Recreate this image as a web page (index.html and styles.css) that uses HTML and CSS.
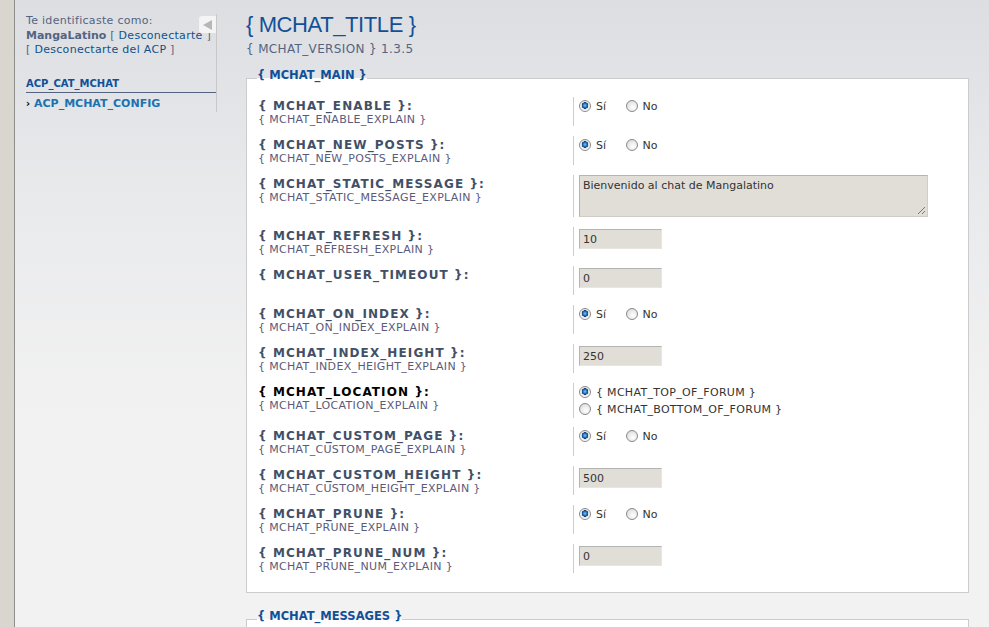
FILE: index.html
```html
<!DOCTYPE html>
<html lang="es">
<head>
    <meta charset="UTF-8">
    <title>mChat</title>
    <link rel="stylesheet" href="styles.css">
</head>
<body>
<div class="strip"></div>
<div class="sidebar">
    <div class="menu">
        <div class="login">
            Te identificaste como:<br>
            <b>MangaLatino</b> [ <a href="#">Desconectarte</a> ]<br>
            [ <a href="#">Desconectarte del ACP</a> ]
        </div>
        <div class="cat">ACP_CAT_MCHAT</div>
        <div class="item"><span class="arrow">&#8250;</span>ACP_MCHAT_CONFIG</div>
        <div class="collapse"><span class="tri"></span></div>
    </div>
</div>
<div class="main">
    <h1>{ MCHAT_TITLE }</h1>
    <p class="version">{ MCHAT_VERSION } 1.3.5</p>

    <fieldset>
        <legend>{ MCHAT_MAIN }</legend>
        <dl>
            <dt><label>{ MCHAT_ENABLE }:</label><span>{ MCHAT_ENABLE_EXPLAIN }</span></dt>
            <dd class="yn"><span class="radio on"></span>Sí <span class="radio"></span>No</dd>
        </dl>
        <dl>
            <dt><label>{ MCHAT_NEW_POSTS }:</label><span>{ MCHAT_NEW_POSTS_EXPLAIN }</span></dt>
            <dd class="yn"><span class="radio on"></span>Sí <span class="radio"></span>No</dd>
        </dl>
        <dl class="tall">
            <dt><label>{ MCHAT_STATIC_MESSAGE }:</label><span>{ MCHAT_STATIC_MESSAGE_EXPLAIN }</span></dt>
            <dd><div class="textarea">Bienvenido al chat de Mangalatino<span class="grip"></span></div></dd>
        </dl>
        <dl>
            <dt><label>{ MCHAT_REFRESH }:</label><span>{ MCHAT_REFRESH_EXPLAIN }</span></dt>
            <dd><div class="input">10</div></dd>
        </dl>
        <dl>
            <dt><label>{ MCHAT_USER_TIMEOUT }:</label></dt>
            <dd><div class="input">0</div></dd>
        </dl>
        <dl>
            <dt><label>{ MCHAT_ON_INDEX }:</label><span>{ MCHAT_ON_INDEX_EXPLAIN }</span></dt>
            <dd class="yn"><span class="radio on"></span>Sí <span class="radio"></span>No</dd>
        </dl>
        <dl>
            <dt><label>{ MCHAT_INDEX_HEIGHT }:</label><span>{ MCHAT_INDEX_HEIGHT_EXPLAIN }</span></dt>
            <dd><div class="input">250</div></dd>
        </dl>
        <dl class="double">
            <dt><label class="hot">{ MCHAT_LOCATION }:</label><span>{ MCHAT_LOCATION_EXPLAIN }</span></dt>
            <dd>
                <div class="opt"><span class="radio on"></span>{ MCHAT_TOP_OF_FORUM }</div>
                <div class="opt"><span class="radio"></span>{ MCHAT_BOTTOM_OF_FORUM }</div>
            </dd>
        </dl>
        <dl>
            <dt><label>{ MCHAT_CUSTOM_PAGE }:</label><span>{ MCHAT_CUSTOM_PAGE_EXPLAIN }</span></dt>
            <dd class="yn"><span class="radio on"></span>Sí <span class="radio"></span>No</dd>
        </dl>
        <dl>
            <dt><label>{ MCHAT_CUSTOM_HEIGHT }:</label><span>{ MCHAT_CUSTOM_HEIGHT_EXPLAIN }</span></dt>
            <dd><div class="input">500</div></dd>
        </dl>
        <dl>
            <dt><label>{ MCHAT_PRUNE }:</label><span>{ MCHAT_PRUNE_EXPLAIN }</span></dt>
            <dd class="yn"><span class="radio on"></span>Sí <span class="radio"></span>No</dd>
        </dl>
        <dl>
            <dt><label>{ MCHAT_PRUNE_NUM }:</label><span>{ MCHAT_PRUNE_NUM_EXPLAIN }</span></dt>
            <dd><div class="input">0</div></dd>
        </dl>
    </fieldset>

    <fieldset class="next">
        <legend>{ MCHAT_MESSAGES }</legend>
    </fieldset>
</div>
</body>
</html>
```

FILE: styles.css
```css
html, body{
    margin:0;
    height:100%;
    overflow:hidden;
}
body{
    display:flex;
    font-family: "DejaVu Sans", Verdana, sans-serif;
    font-size:11px;
    color:#536482;
    background: linear-gradient(#dcdee2 0, #e9eaec 200px, #f2f2f2 420px);
}
.strip{
    width:14px;
    flex:none;
    background:#d9d6cf;
    border-right:1px solid #8e8e8e;
}
.sidebar{
    width:202px;
    flex:none;
}
.menu{
    position:relative;
    margin-top:14px;
    height:98px;
    padding-left:11px;
    border-right:1px solid #c8c8c8;
}
.login{
    line-height:14.5px;
    letter-spacing:0.3px;
    color:#536482;
    white-space:nowrap;
}
.login b{ color:#536482; letter-spacing:0; }
.login a{
    color:#105289;
    text-decoration:none;
}
.cat{
    margin-top:20px;
    padding-bottom:3px;
    font-size:10px;
    font-weight:bold;
    color:#115098;
    border-bottom:1px solid #536482;
}
.item{
    margin-top:4px;
    font-weight:bold;
    color:#1b72b2;
}
.arrow{
    display:inline-block;
    width:8px;
    color:#000;
    font-size:10px;
}
.collapse{
    position:absolute;
    top:2px;
    right:0;
    width:17px;
    height:17px;
    background:#f4f4f4;
    border-radius:3px 0 0 3px;
}
.tri{
    position:absolute;
    top:4px;
    left:4px;
    border-style:solid;
    border-width:5px 9px 5px 0;
    border-color:transparent #b7b7b7 transparent transparent;
}

.main{
    flex:1;
    padding:0 20px 0 29px;
}
h1{
    margin:8px 0 0;
    font-family: "Liberation Sans", Arial, sans-serif;
    font-size:22px;
    letter-spacing:-0.4px;
    font-weight:normal;
    color:#115098;
    line-height:34px;
}
.version{
    margin:0;
    font-size:12px;
    letter-spacing:0.35px;
    color:#536482;
}
fieldset{
    margin:12px 0 0;
    padding:8px 11px 9px;
    background:#fff;
    border:1px solid #cccccc;
}
legend{
    padding:0 0 7px;
    margin-left:-1px;
    font-weight:bold;
    font-size:11.5px;
    color:#115098;
}
fieldset.next{
    margin-top:16px;
    height:40px;
}
dl{
    display:flex;
    margin:0 0 10px;
    min-height:29px;
}
dl.tall{ min-height:42px; }
dl.double{ min-height:34px; margin-bottom:9px; }
dt{
    width:315px;
    flex:none;
    padding-top:3px;
    line-height:13px;
}
dt label{
    display:block;
    font-size:12px;
    letter-spacing:1.1px;
    font-weight:bold;
    color:#425067;
}
dt label.hot{ color:#000; }
dt span{
    display:block;
    letter-spacing:0.33px;
    color:#5c5a7a;
}
dd{
    margin:0;
    padding-left:5px;
    border-left:1px solid #cccccc;
    color:#333;
    line-height:13px;
}
dd.yn{ padding-top:0; }
dl.double dd{ padding-top:1px; }
.radio{
    display:inline-block;
    box-sizing:border-box;
    width:12px;
    height:12px;
    margin:3px 5px 0 0;
    vertical-align:-2px;
    border:1px solid #8a8a8a;
    border-radius:50%;
    background:radial-gradient(circle at 60% 65%, #ffffff 0, #e6e6e6 60%, #c9c9c9 100%);
}
.radio.on{
    background:radial-gradient(circle at 50% 45%, #7fc3ff 0, #1c6fb8 28%, #0d3f7a 42%, #dcdcdc 46%, #ffffff 70%, #cfcfcf 100%);
}
dd .radio ~ .radio{ margin-left:16px; }
.opt{ height:17px; line-height:17px; letter-spacing:0.3px; }
.opt .radio{ margin-top:0; }
.input{
    box-sizing:border-box;
    width:83px;
    height:20px;
    margin-top:2px;
    padding:3px 3px 0;
    background:#e1ded8;
    border:1px solid #b4b4b4;
    border-right-color:#e9e6e0;
    border-bottom-color:#e9e6e0;
    color:#333;
    font-size:11px;
}
.textarea{
    position:relative;
    box-sizing:border-box;
    width:349px;
    height:42px;
    padding:3px 3px 0;
    background:#e1ded8;
    border:1px solid #b4b4b4;
    border-right-color:#d0cdc7;
    border-bottom-color:#d0cdc7;
    color:#333;
    font-size:11px;
}
.grip{
    position:absolute;
    right:2px;
    bottom:2px;
    width:7px;
    height:7px;
    background:linear-gradient(135deg, transparent 45%, #777 45%, #777 55%, transparent 55%, transparent 72%, #777 72%, #777 82%, transparent 82%);
}
```
